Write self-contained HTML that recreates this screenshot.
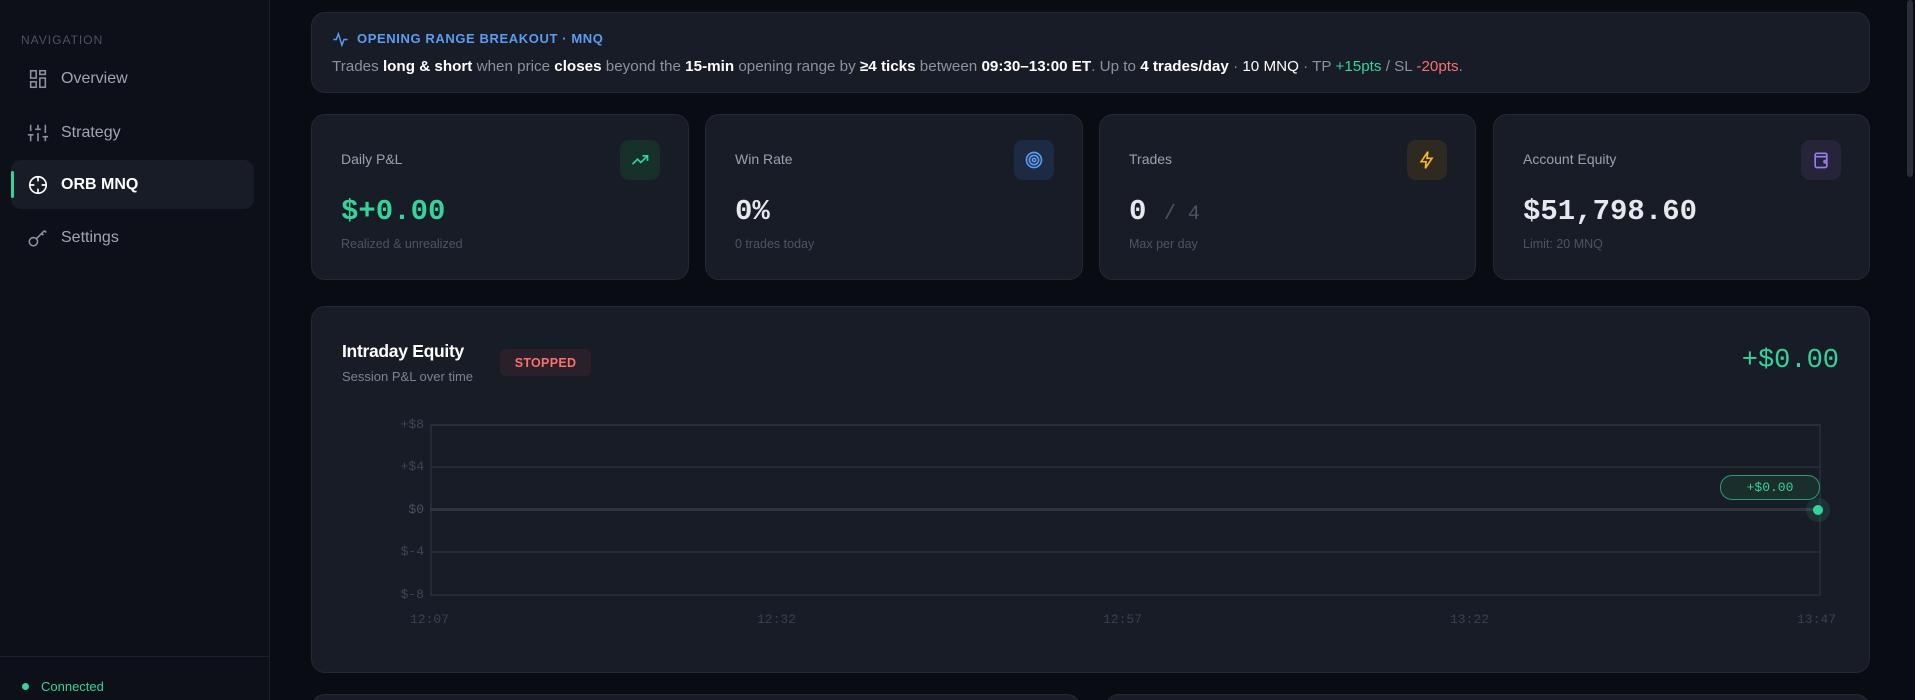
<!DOCTYPE html>
<html><head><meta charset="utf-8"><style>
*{box-sizing:border-box;margin:0;padding:0}
html,body{width:1915px;height:700px;overflow:hidden}
body{background:#090c13;font-family:"Liberation Sans",sans-serif;color:#e6e8ee}
#w{position:relative;width:1915px;height:700px;overflow:hidden}
.sb{position:absolute;left:0;top:0;width:270px;height:700px;background:#0d1018;border-right:1px solid #1d212b}
.nav-h{position:absolute;left:21px;top:33px;font-size:12px;letter-spacing:1px;color:#4c5263}
.ni{position:absolute;left:11px;width:243px;height:49px;display:flex;align-items:center;padding-left:16px;font-size:16px;color:#a0a5b3}
.ni svg{width:22px;height:22px;margin-right:12px}
.ni.act{background:#181c26;border-radius:10px;color:#fff;font-weight:bold}
.ni.act:before{content:"";position:absolute;left:0;top:11px;width:3px;height:27px;background:#34d399;border-radius:2px}
.sbl{position:absolute;left:0;top:656px;width:270px;border-top:1px solid #1d212b}
.conn{position:absolute;left:22px;top:679px;font-size:13px;color:#34d399;display:flex;align-items:center}
.conn i{width:7px;height:7px;border-radius:50%;background:#34d399;margin-right:12px}
.card{position:absolute;background:#181c26;border:1px solid #242935;border-radius:14px}
.mono{font-family:"Liberation Mono",monospace}
.lbl{position:absolute;left:29px;top:36px;font-size:14px;color:#9aa0ae}
.val{position:absolute;left:29px;top:80px;font-size:29px;font-weight:bold}
.sub{position:absolute;left:29px;top:122px;font-size:12.5px;color:#4d5364}
.ib{position:absolute;right:28px;top:25px;width:40px;height:40px;border-radius:9px;display:flex;align-items:center;justify-content:center}
.ylab{position:absolute;width:60px;text-align:right;font-size:13px;color:#3f4556}
.xlab{position:absolute;font-size:13px;color:#3a4050}
.gl{position:absolute;left:430px;width:1390px;height:2px;background:#262a35}
</style></head><body><div id="w">
<div class="sb">
<div class="nav-h">NAVIGATION</div>
<div class="ni" style="top:54px"><svg viewBox="0 0 24 24" fill="none" stroke="#8c92a0" stroke-width="1.7"><rect x="4" y="3" width="6" height="8"/><rect x="14" y="3" width="6" height="4"/><rect x="14" y="11" width="6" height="10"/><rect x="4" y="15" width="6" height="6"/></svg>Overview</div>
<div class="ni" style="top:108px"><svg viewBox="0 0 24 24" fill="none" stroke="#8c92a0" stroke-width="1.7"><path d="M4 21v-7M4 10V3M12 21v-9M12 8V3M20 21v-5M20 12V3M1 14h6M9 8h6M17 16h6"/></svg>Strategy</div>
<div class="ni act" style="top:160px"><svg viewBox="0 0 24 24" fill="none" stroke="#fff" stroke-width="1.8"><circle cx="12" cy="12" r="9"/><path d="M12 3v5M12 16v5M3 12h5M16 12h5"/></svg>ORB MNQ</div>
<div class="ni" style="top:213px"><svg viewBox="0 0 24 24" fill="none" stroke="#8c92a0" stroke-width="1.7"><circle cx="7" cy="16" r="4.5"/><path d="M10 13l9-9M16 7l2 2M19 4l2 2"/></svg>Settings</div>
<div class="sbl"></div>
<div class="conn"><i></i>Connected</div>
</div>
<div style="position:absolute;right:2px;top:0;width:6px;height:177px;background:#2a2e38;border-radius:3px"></div>

<div class="card" style="left:311px;top:12px;width:1559px;height:81px">
<svg style="position:absolute;left:20px;top:18px" width="17" height="17" viewBox="0 0 24 24" fill="none" stroke="#5b9cf0" stroke-width="2"><path d="M2 12h4l3-8 5 16 3-8h5"/></svg>
<div style="position:absolute;left:45px;top:18px;font-size:13px;font-weight:bold;color:#5b9cf0;letter-spacing:.6px">OPENING RANGE BREAKOUT · MNQ</div>
<div style="position:absolute;left:20px;top:45px;font-size:15.2px;color:#8b91a0;white-space:nowrap;letter-spacing:0">Trades <b style="color:#fff">long &amp; short</b> when price <b style="color:#fff">closes</b> beyond the <b style="color:#fff">15-min</b> opening range by <b style="color:#fff">≥4 ticks</b> between <b style="color:#fff">09:30–13:00 ET</b>. Up to <b style="color:#fff">4 trades/day</b> · <span style="color:#fff">10 MNQ</span> · TP <span style="color:#34d399">+15pts</span> / SL <span style="color:#f87171">-20pts</span>.</div>
</div>

<div class="card" style="left:311px;top:114px;width:378px;height:166px">
<div class="lbl">Daily P&amp;L</div>
<div class="ib" style="background:#173029"><svg width="20" height="20" viewBox="0 0 24 24" fill="none" stroke="#34d399" stroke-width="2"><path d="M3 17l6-6 4 4 8-8M15 7h6v6"/></svg></div>
<div class="val mono" style="color:#34d399">$+0.00</div>
<div class="sub">Realized &amp; unrealized</div>
</div>
<div class="card" style="left:705px;top:114px;width:378px;height:166px">
<div class="lbl">Win Rate</div>
<div class="ib" style="background:#1d2a44"><svg width="20" height="20" viewBox="0 0 24 24" fill="none" stroke="#5b9cf0" stroke-width="2"><circle cx="12" cy="12" r="9"/><circle cx="12" cy="12" r="5.5"/><circle cx="12" cy="12" r="2"/></svg></div>
<div class="val mono">0%</div>
<div class="sub">0 trades today</div>
</div>
<div class="card" style="left:1099px;top:114px;width:377px;height:166px">
<div class="lbl">Trades</div>
<div class="ib" style="background:#2e2a22"><svg width="20" height="20" viewBox="0 0 24 24" fill="none" stroke="#f5b72a" stroke-width="2"><path d="M13 2L5 14h6l-1 8 8-12h-6z"/></svg></div>
<div class="val mono">0 <span style="font-size:20px;color:#4d5364;font-weight:normal">/ 4</span></div>
<div class="sub">Max per day</div>
</div>
<div class="card" style="left:1493px;top:114px;width:377px;height:166px">
<div class="lbl">Account Equity</div>
<div class="ib" style="background:#252438"><svg width="20" height="20" viewBox="0 0 24 24" fill="none" stroke="#9b7bf0" stroke-width="2"><rect x="5" y="4" width="14" height="17" rx="2"/><path d="M5 8h14"/><circle cx="17" cy="14" r="1.5"/></svg></div>
<div class="val mono">$51,798.60</div>
<div class="sub">Limit: 20 MNQ</div>
</div>

<div class="card" style="left:311px;top:306px;width:1559px;height:367px"></div>
<div style="position:absolute;left:342px;top:341px;font-size:17.5px;font-weight:bold;color:#fff;letter-spacing:-.3px">Intraday Equity</div>
<div style="position:absolute;left:342px;top:369px;font-size:13px;color:#7c8292">Session P&amp;L over time</div>
<div style="position:absolute;left:500px;top:349px;width:91px;height:27px;border-radius:6px;background:#2a2029;color:#f87171;font-size:12.5px;font-weight:bold;display:flex;align-items:center;justify-content:center;letter-spacing:.3px">STOPPED</div>
<div class="mono" style="position:absolute;right:76px;top:346px;font-size:27px;color:#34d399">+$0.00</div>

<div style="position:absolute;left:430px;top:424px;width:1391px;height:172px;border:2px solid #262a35;border-top-color:#2a2e38"></div>
<div class="gl" style="top:466px"></div>
<div class="gl" style="top:508px;background:#30343f;height:3px"></div>
<div class="gl" style="top:551px"></div>
<div class="ylab mono" style="left:364px;top:417px">+$8</div>
<div class="ylab mono" style="left:364px;top:459px">+$4</div>
<div class="ylab mono" style="left:364px;top:502px;color:#4a5060">$0</div>
<div class="ylab mono" style="left:364px;top:544px">$-4</div>
<div class="ylab mono" style="left:364px;top:587px">$-8</div>
<div class="xlab mono" style="left:410px;top:612px">12:07</div>
<div class="xlab mono" style="left:757px;top:612px">12:32</div>
<div class="xlab mono" style="left:1103px;top:612px">12:57</div>
<div class="xlab mono" style="left:1450px;top:612px">13:22</div>
<div class="xlab mono" style="left:1797px;top:612px;width:42px;overflow:hidden">13:47</div>
<div class="mono" style="position:absolute;left:1720px;top:475px;width:100px;height:25px;border:1.5px solid #2a9c74;border-radius:12px;background:#1a2e2c;color:#34d399;font-size:13px;display:flex;align-items:center;justify-content:center">+$0.00</div>
<div style="position:absolute;left:1806px;top:498px;width:24px;height:24px;border-radius:50%;background:rgba(52,211,153,.12)"></div>
<div style="position:absolute;left:1813px;top:505px;width:10px;height:10px;border-radius:50%;background:#34d399"></div>

<div class="card" style="left:311px;top:694px;width:770px;height:40px"></div>
<div class="card" style="left:1105px;top:694px;width:765px;height:40px"></div>
</div></body></html>
